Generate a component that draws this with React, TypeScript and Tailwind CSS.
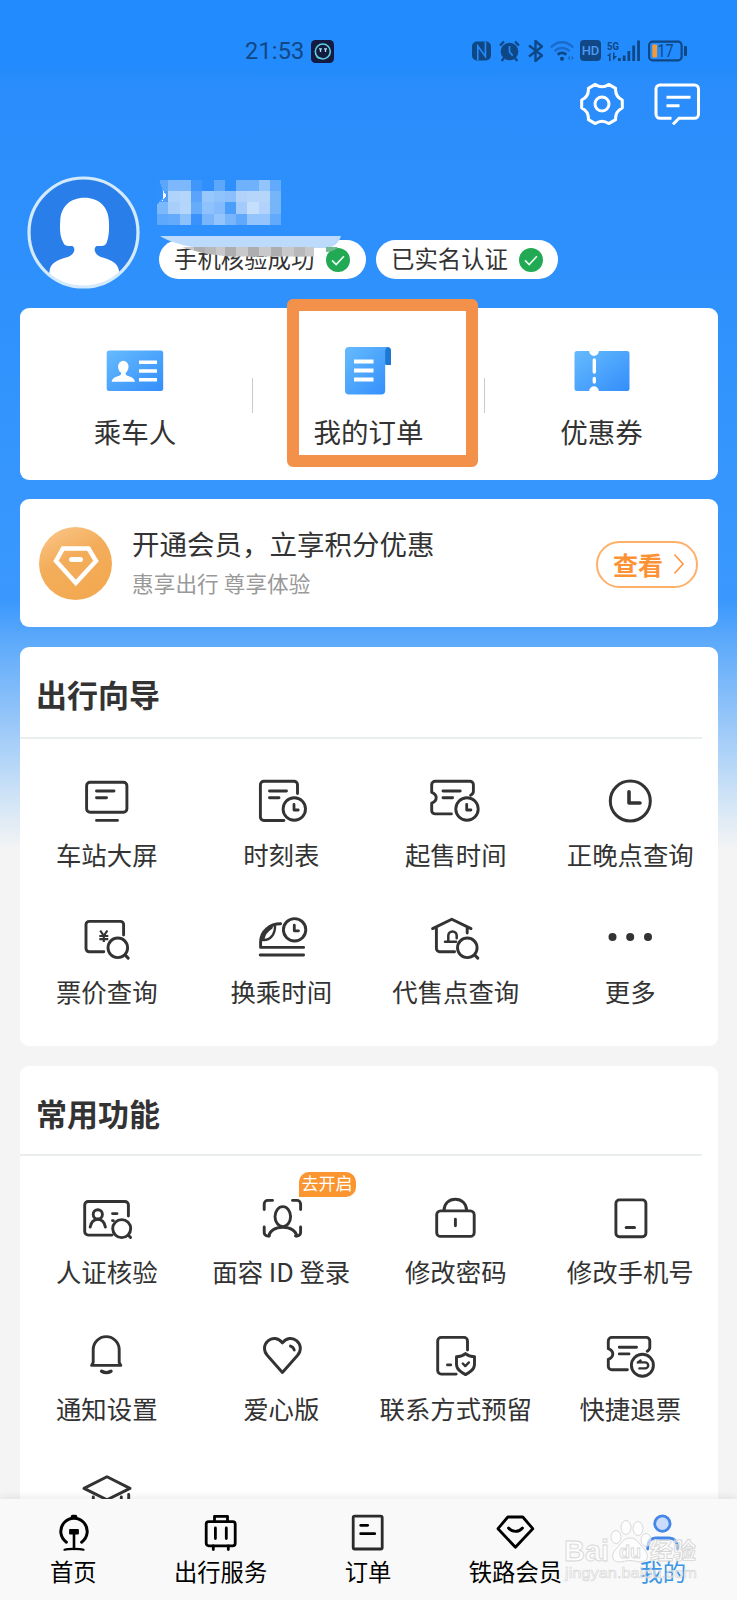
import type {ReactNode} from 'react';

type MenuItem = { label: string; icon: ReactNode; badge?: string };

const INK = '#333333';
const STATUS = '#0f4684';

const mosaic = [
    ['#5ba6fb', '#7db8fc', '#7db8fc', '#3f97fd', '#2f8ffc', '#5ea8fc', '#2d8efc', '#70b1fc', '#70b1fc', '#93c5fc', '#62aafc'],
    ['#4f9ffb', '#b0d3fb', '#b5d6fb', '#5aa5fb', '#98c7fc', '#8ec3fc', '#8abffc', '#b0d2fb', '#b5d5fb', '#b5d5fb', '#77b5fb'],
    ['#7cb8fc', '#a8cffc', '#b5d6fc', '#65acfb', '#8fc2fc', '#83bbfc', '#4c9efb', '#a3ccfc', '#c5defc', '#b0d2fc', '#77b5fb'],
    ['#5fa8fb', '#65abfb', '#8dc1fc', '#3a93fc', '#78b5fb', '#93c5fc', '#78b5fb', '#5fa8fb', '#93c5fc', '#93c5fc', '#62aafb'],
];

function LineIcon({children}: { children: ReactNode }) {
    return (
        <svg
            className="block h-[48px] w-[60px] shrink-0"
            viewBox="0 0 60 48"
            fill="none"
            stroke={INK}
            strokeWidth="2.9"
            strokeLinecap="round"
            strokeLinejoin="round"
        >
            {children}
        </svg>
    );
}

function SmallClock({cx, cy}: { cx: number; cy: number }) {
    return (
        <>
            <circle cx={cx} cy={cy} r="11.2" />
            <path d={`M${cx - 0.3} ${cy - 4.6}v5.6h4.2`} strokeWidth="2.8" />
        </>
    );
}

const guideItems: MenuItem[] = [
    {
        label: '车站大屏',
        icon: (
            <LineIcon>
                <rect x="9.6" y="5.2" width="40.3" height="30" rx="3.5" />
                <path d="M19.5 14H37M19.5 20.7h10M19.5 43.4h21" />
            </LineIcon>
        ),
    },
    {
        label: '时刻表',
        icon: (
            <LineIcon>
                <path d="M45.5 16.5V7.7a3.5 3.5 0 0 0-3.5-3.5H11.9a3.5 3.5 0 0 0-3.5 3.5V40a3.5 3.5 0 0 0 3.5 3.5h20" />
                <path d="M17.5 14h17M17.5 20.7h9.5" />
                <SmallClock cx={42.3} cy={32} />
            </LineIcon>
        ),
    },
    {
        label: '起售时间',
        icon: (
            <LineIcon>
                <path d="M44.6 18.2c2-1 2.8-2 2.8-4V7.7a3.5 3.5 0 0 0-3.5-3.5H9.2a3.5 3.5 0 0 0-3.5 3.5v7.6c6 2.4 6 8.4 0 10.8v7.3a3.5 3.5 0 0 0 3.5 3.5h16.2" />
                <path d="M17 14h17.2M17 20.7h9.6" />
                <SmallClock cx={41} cy={32} />
            </LineIcon>
        ),
    },
    {
        label: '正晚点查询',
        icon: (
            <LineIcon>
                <circle cx="29.3" cy="24" r="20" strokeWidth="3" />
                <path d="M28 14.8V26h11" strokeWidth="3.6" />
            </LineIcon>
        ),
    },
    {
        label: '票价查询',
        icon: (
            <LineIcon>
                <path d="M46.6 21V10.6a3.2 3.2 0 0 0-3.2-3.2H12.2A3.2 3.2 0 0 0 9 10.6v24a3.2 3.2 0 0 0 3.2 3.2h14.6" />
                <path d="m23.2 16.5 3.6 5.3 3.6-5.3M26.8 21.8V28M22.3 22h9M22.3 25.2h9" strokeWidth="2.2" strokeLinecap="butt" />
                <circle cx="40.8" cy="33.8" r="9.8" />
                <path d="m48.2 41.1 3 3" strokeWidth="3" />
            </LineIcon>
        ),
    },
    {
        label: '换乘时间',
        icon: (
            <LineIcon>
                <path d="M28.6 9.8C18 9.8 8.6 17 8.6 28v5.4h43M8.2 41h43.4" />
                <path d="M11 26c7 .6 12.2-5.6 12-13.8" strokeWidth="2.4" />
                <path d="M11 25.2c.8-4.6 3.8-8.6 8.4-11.6" strokeWidth="2.8" />
                <SmallClock cx={42.6} cy={15.8} />
            </LineIcon>
        ),
    },
    {
        label: '代售点查询',
        icon: (
            <LineIcon>
                <path d="M6.6 14.6 25.8 5.2 45 14.6M10.4 13.5v21a3.2 3.2 0 0 0 3.2 3.2h15M41.2 13.5v5.6" />
                <path d="M22.3 27.3v-5.6a4.2 4.2 0 0 1 8.4 0v2.6M19 27.8h11" strokeWidth="2.5" />
                <circle cx="41.3" cy="33.8" r="9.8" />
                <path d="m48.8 41.1 3 3" strokeWidth="3" />
            </LineIcon>
        ),
    },
    {
        label: '更多',
        icon: (
            <LineIcon>
                <g fill={INK} stroke="none">
                    <circle cx="11.5" cy="23" r="4" />
                    <circle cx="29.2" cy="23" r="4" />
                    <circle cx="47" cy="23" r="4" />
                </g>
            </LineIcon>
        ),
    },
];

const commonItems: MenuItem[] = [
    {
        label: '人证核验',
        icon: (
            <LineIcon>
                <path d="M51.4 22V11a3.5 3.5 0 0 0-3.5-3.5H11.2A3.5 3.5 0 0 0 7.7 11v26.6a3.5 3.5 0 0 0 3.5 3.5H35" />
                <circle cx="20.8" cy="20.4" r="4.6" />
                <path d="M13.2 33c.8-4.6 3.7-7.8 7.6-7.8s6.8 3.2 7.6 7.8" />
                <path d="M35.5 19.6H40M35.5 26.6h.8" />
                <circle cx="44.7" cy="34.6" r="9" />
                <path d="m51.3 41.2 2.2 2.2" />
            </LineIcon>
        ),
    },
    {
        label: '面容 ID 登录',
        badge: '去开启',
        icon: (
            <LineIcon>
                <path d="M12.2 15.5V10a3.6 3.6 0 0 1 3.6-3.6h4.7M40.5 6.4H45a3.6 3.6 0 0 1 3.6 3.6v5.5M12.2 33v5.5a3.6 3.6 0 0 0 3.6 3.6h1.5M48.6 33v5.5a3.6 3.6 0 0 1-3.6 3.6h-1.5" />
                <ellipse cx="30.8" cy="22.6" rx="7.8" ry="10" />
                <path d="M16.8 41.8c1-4.8 6-8.6 14-8.6s13 3.8 14 8.6" />
            </LineIcon>
        ),
    },
    {
        label: '修改密码',
        icon: (
            <LineIcon>
                <rect x="10.7" y="16.9" width="37.5" height="25.5" rx="4" />
                <path d="M18 16.4C18 9.5 23 5.2 29.3 5.2s11.3 4.3 11.3 11.2M29.4 25.2v6.6" />
            </LineIcon>
        ),
    },
    {
        label: '修改手机号',
        icon: (
            <LineIcon>
                <rect x="14.9" y="5.9" width="30" height="36.8" rx="3.5" />
                <path d="M25.2 33.6h8.3" strokeWidth="3" />
            </LineIcon>
        ),
    },
    {
        label: '通知设置',
        icon: (
            <LineIcon>
                <path d="M16.2 31.5V18.6a13 13 0 0 1 26 0v12.9l1.6 2.9H14.6z" />
                <path d="M24.6 40.2c2.8 1.7 6.6 1.7 9.4 0" strokeWidth="3.4" />
            </LineIcon>
        ),
    },
    {
        label: '爱心版',
        icon: (
            <LineIcon>
                <path d="M30.4 11.9c-4-5.2-10.2-5.7-14.4-2.1-4.6 4-4.6 10.5-.6 14.7l15 17 15-17c4-4.2 4-10.7-.6-14.7-4.2-3.6-10.4-3.1-14.4 2.1z" />
                <path d="M38.5 15.1c2 .5 3.2 1.9 3.7 3.9" />
            </LineIcon>
        ),
    },
    {
        label: '联系方式预留',
        icon: (
            <LineIcon>
                <path d="M41.5 19V9.9A3.5 3.5 0 0 0 38 6.4H15.2a3.5 3.5 0 0 0-3.5 3.5v29.7a3.5 3.5 0 0 0 3.5 3.5h15M21.5 33.9h3.2" />
                <path d="M39.5 22.6c2.5 2.2 5.6 3 9 3v7.6c0 5.4-4.5 8-9 10.4-4.5-2.4-9-5-9-10.4v-7.6c3.4 0 6.5-.8 9-3z" />
                <path d="m36.8 32.5 2.5 2.6 3.6-3.7" strokeWidth="2.4" />
            </LineIcon>
        ),
    },
    {
        label: '快捷退票',
        icon: (
            <LineIcon>
                <path d="M46.2 20.2c1.8-1 2.6-2 2.6-4V9.9a3.5 3.5 0 0 0-3.5-3.5H10.8a3.5 3.5 0 0 0-3.5 3.5v7.8c6 2.4 6 8 0 10.6v7a3.5 3.5 0 0 0 3.5 3.5h15.6" />
                <path d="M18.3 16.2h17.2M18.3 22.9H28" />
                <circle cx="41.4" cy="34.3" r="11" />
                <path d="M36.8 31.4h7.4a3 3 0 0 1 0 6h-5.8M36.8 31.4l2.8-1.8" strokeWidth="2.4" />
            </LineIcon>
        ),
    },
    {
        label: '',
        icon: (
            <LineIcon>
                <path d="M30 7.8 53 19.4 30 30.8 7 19.4zM16.3 28V38M44.3 28V38M51.7 25.4V38" />
            </LineIcon>
        ),
    },
];

function Check() {
    return (
        <svg className="block h-[24px] w-[24px]" viewBox="0 0 24 24" fill="none">
            <circle cx="12" cy="12" r="12" fill="#22a953" />
            <path d="m6 12.4 4.2 4.2 7.7-8.4" stroke="#e9fff0" strokeWidth="1.7" />
        </svg>
    );
}

function StatusBar() {
    return (
        <div className="flex h-[22px] items-center">
            <span className="ml-[245px] w-[60px] font-[Roboto] text-[23.5px] leading-[22px] tracking-[0.2px] text-[#124785]">21:53</span>
            <svg className="ml-[6px] block h-[23px] w-[23px]" viewBox="0 0 23 23" fill="none">
                <rect width="23" height="23" rx="4.5" fill="#151a40" />
                <circle cx="11.8" cy="11.5" r="7.5" stroke="#5bd0dc" strokeWidth="1.6" />
                <path d="M8 8.8h3M13 8.8h3M9.5 9v3M14.5 9v3" stroke="#a9e4f0" strokeWidth="1.3" />
                <path d="M5.5 16.5c1.5 1.5 3.5 2 5 1.5" stroke="#5bd0dc" strokeWidth="1.6" />
            </svg>
            <div className="-mt-px ml-[138px] flex h-[22px] items-center">
                <svg className="block" width="19" height="22" viewBox="0 0 19 22" fill="none">
                    <rect y="1.5" width="19" height="19" rx="5" fill={STATUS} />
                    <path d="M5.8 20V6l7.6 10.5V2" stroke="#2389fa" strokeWidth="1.7" />
                </svg>
                <svg className="ml-[8px] block" width="21" height="22" viewBox="0 0 21 22" fill="none">
                    <circle cx="10.5" cy="11.5" r="8.8" fill={STATUS} />
                    <path d="M1 5.5 5 1.5M20 5.5l-4-4M5 18l-2.3 3M16 18l2.3 3" stroke={STATUS} strokeWidth="2.3" />
                    <path d="M10.5 6v6l3.2 3.6" stroke="#2389fa" strokeWidth="1.7" />
                </svg>
                <svg className="ml-[8px] block" width="15" height="22" viewBox="0 0 15 22" fill="none">
                    <path d="M1 5.5 14 15.5 7.5 21V1L14 6.5 1 16.5" stroke={STATUS} strokeWidth="2.3" />
                </svg>
                <svg className="ml-[7px] block" width="24" height="22" viewBox="0 0 24 22" fill="none">
                    <path d="M.8 7.5c6.4-7 16-7 22.4 0M4.5 11.3c4.2-4.4 10.8-4.4 15 0" stroke="#1b6bcb" strokeWidth="2.3" />
                    <path d="M7.7 14.8c2.5-2.5 6.1-2.5 8.6 0" stroke={STATUS} strokeWidth="2.7" />
                    <circle cx="12" cy="18.8" r="2.1" fill={STATUS} />
                    <path d="m20 15.5-2.5 2.5 2.5 2.5zM21.5 15.5 24 18l-2.5 2.5z" fill="#1b6bcb" />
                </svg>
                <div className="ml-[6px] flex h-[21px] w-[21px] items-center justify-center rounded-[4px] bg-[#124785] font-[Roboto] text-[13px] leading-[18px] font-medium text-[#4a9bf5]">HD</div>
                <svg className="ml-[6px] block" width="33" height="22" viewBox="0 0 33 22">
                    <text x="0" y="9.5" fontFamily="Roboto" fontWeight="700" fontSize="11" textLength="12" lengthAdjust="spacingAndGlyphs" fill={STATUS}>5G</text>
                    <path d="M0 16l3.5-3.5V21H2v-5zM6 12.5h1.5V16H10l-4 4.5zM11 18h2.7v3H11zM15.8 15.5h2.7V21h-2.7zM20.5 11h2.7v10h-2.7zM25.3 5.5H28V21h-2.7zM30.2.5h2.7V21h-2.7z" fill={STATUS} />
                </svg>
                <svg className="ml-[8px] block" width="40" height="22" viewBox="0 0 40 22">
                    <rect x="1.1" y="1.6" width="32.5" height="18.8" rx="3.5" fill="none" stroke={STATUS} strokeWidth="2.1" />
                    <rect x="36" y="6" width="3" height="10" rx="1" fill={STATUS} />
                    <rect x="4.3" y="4.6" width="4.8" height="12.8" rx="1" fill="#f79a36" />
                    <text x="9.5" y="17.2" fontFamily="Roboto" fontSize="17.5" textLength="16" lengthAdjust="spacingAndGlyphs" fill={STATUS}>17</text>
                </svg>
            </div>
        </div>
    );
}

function TopActions() {
    return (
        <div className="mt-[21px] flex h-[42px] justify-end gap-[30px] pr-[37.5px]">
            <svg className="block" width="44" height="42" viewBox="-22 -21 44 42" fill="none" stroke="#fff" strokeWidth="3" strokeLinejoin="round">
                <path d="M20.3-4V4Q13 7.5 13.6 15.6L6.7 19.6Q0 15-6.7 19.6L-13.6 15.6Q-13 7.5-20.3 4V-4Q-13-7.5-13.6-15.6L-6.7-19.6Q0-15 6.7-19.6L13.6-15.6Q13-7.5 20.3-4z" />
                <circle r="7" />
            </svg>
            <svg className="block" width="46" height="42" viewBox="0 0 46 42" fill="none" stroke="#fff" strokeWidth="3">
                <path d="M17.5 35.3H6a4 4 0 0 1-4-4V6a4 4 0 0 1 4-4h34.5a4 4 0 0 1 4 4v25.3a4 4 0 0 1-4 4H25l-6 6" />
                <path d="M12.5 14.2h24M12.5 22.8h13" />
            </svg>
        </div>
    );
}

function Avatar() {
    return (
        <svg className="block h-[113px] w-[113px] shrink-0" viewBox="0 0 113 113">
            <defs>
                <clipPath id="avatar">
                    <circle cx="56.5" cy="56.5" r="54" />
                </clipPath>
            </defs>
            <circle cx="56.5" cy="56.5" r="54.5" fill="#297ee9" />
            <path
                clipPath="url(#avatar)"
                fill="#fff"
                d="M57.5 21.8C43 21.8 34 31 33.3 44c-.7 9-.5 17 3.2 23 1 2.2 2.5 3 5 3h4c1.6 1 2.3 3.500 1.500 5.500-2 5-7 5.500-12 7.300-7 2.500-11.500 5.500-12.500 12.200L21 113h74l-3-18c-1-6.700-5.500-9.700-12.500-12.200-5-1.800-9.500-2.300-11.500-7.300-.8-2-.1-4.500 1.500-5.500h5c2.500 0 4-1 5-3 2.500-6 3-14 2.300-23C81 31 72 21.800 57.500 21.800z"
            />
            <circle cx="56.5" cy="56.5" r="54.5" fill="none" stroke="#d3eafc" strokeWidth="3.2" />
        </svg>
    );
}

// blurred-out user name and the smear that runs over the first tag
function Redaction() {
    return (
        <>
            <svg className="absolute top-[4px] left-[17px] block" width="125" height="45" viewBox="0 0 125 45" shapeRendering="crispEdges">
                {mosaic.map((row, y) =>
                    row.map((fill, x) => <rect key={`${y}-${x}`} x={x * 11.3} y={y * 11.2} width="11.4" height="11.3" fill={fill} />),
                )}
                <path d="M0 0h2.5l3 11 5 4.5-7 4L0 25z" fill="#2e90fc" />
                <path d="M5.5 9v11.500l4-4.500z" fill="#f4f9ff" />
            </svg>
            <svg className="absolute top-[60px] left-[20px] block" width="184" height="22" viewBox="0 0 184 22">
                <path d="M0 0h181c-2 6-6 11-14 12H40C24 10 10 6 0 0z" fill="#bbdafc" />
                <path d="M22 11h132v9.5H70C50 19 34 15 22 11z" fill="#c8c8ca" />
                <path d="M34 11h11v6.5L34 14.5zM65 11h11v9.5L65 20zM88 11h11v9.5H88zM111 11h11v9.5h-11z" fill="#adadaf" />
                <path d="M45 11h11v8l-11-1.500zM134 11h11v9.500h-11z" fill="#b8b8ba" />
                <path d="M166 11h12c-3 3.500-7 5-12 5z" fill="#6fbb8f" />
            </svg>
        </>
    );
}

function Profile() {
    return (
        <div className="relative mt-[51px] ml-[27px] flex h-[113px]">
            <Avatar />
            <div className="ml-[19px] flex items-end gap-[10px] pb-[10px] text-[23.4px] leading-[37px] text-[#333]">
                <div className="flex h-[39px] w-[207px] items-start justify-between rounded-full bg-white pr-[16px] pl-[15px]">
                    <span className="whitespace-nowrap">手机核验成功</span>
                    <div className="pt-[8px]">
                        <Check />
                    </div>
                </div>
                <div className="flex h-[39px] w-[182px] items-start justify-between rounded-full bg-white px-[15px]">
                    <span className="whitespace-nowrap">已实名认证</span>
                    <div className="pt-[8px]">
                        <Check />
                    </div>
                </div>
            </div>
            <div className="absolute top-0 left-[113px]">
                <Redaction />
            </div>
        </div>
    );
}

function BlueGradient({id}: { id: string }) {
    return (
        <defs>
            <linearGradient id={id} x1="0" y1="0" x2="1" y2="1">
                <stop offset="0" stopColor="#66bbfd" />
                <stop offset="1" stopColor="#338efb" />
            </linearGradient>
        </defs>
    );
}

function QuickCard() {
    return (
        <section className="relative flex h-[172px] items-start rounded-[9px] bg-white pt-[38px] text-[27.5px] leading-[36px] text-[#333]">
            <div className="flex w-[232px] flex-col items-center">
                <svg className="-ml-[2px] block h-[50px] w-[58px]" viewBox="0 0 58 50">
                    <BlueGradient id="id-card" />
                    <rect x=".7" y="4.5" width="56.5" height="40.5" rx="2.5" fill="url(#id-card)" />
                    <ellipse cx="17.3" cy="21" rx="5.2" ry="6.3" fill="#fff" />
                    <path d="M15 25h4.6v3c1 3 8.5 2 9.4 7.8H5.6C6.5 30 14 31 15 28z" fill="#fff" />
                    <path d="M33 16.2h18M33 25h18M33 33.8h18" stroke="#fff" strokeWidth="3.6" />
                </svg>
                <span className="mt-[17px] -ml-[2px]">乘车人</span>
            </div>
            <div className="mt-[32px] h-[35px] w-px bg-[#c9c9c9]" />
            <div className="flex w-[231px] flex-col items-center">
                <svg className="-ml-px block h-[50px] w-[48px]" viewBox="0 0 48 50">
                    <BlueGradient id="order" />
                    <path d="M39 1h4.5a3.500 3.500 0 0 1 3.500 3.500V19h-4c-2 0-3-1-3-3z" fill="#1c78d2" />
                    <path d="M5 1h39c-2 1-2.800 2.500-2.800 5v38.500a4 4 0 0 1-4 4H5a4 4 0 0 1-4-4V5a4 4 0 0 1 4-4z" fill="url(#order)" />
                    <path d="M10 15.5h19.500M10 24.500h19.500M10 33.500h19.500" stroke="#fff" strokeWidth="3.8" />
                </svg>
                <span className="mt-[17px]">我的订单</span>
            </div>
            <div className="mt-[32px] h-[35px] w-px bg-[#c9c9c9]" />
            <div className="flex w-[233px] flex-col items-center">
                <svg className="block h-[50px] w-[56px]" viewBox="0 0 56 50">
                    <BlueGradient id="coupon" />
                    <path d="M3 5h12c1 6.5 9 6.5 10 0h28a2.5 2.5 0 0 1 2.5 2.5v35A2.5 2.5 0 0 1 53 45H25c-1-6.5-9-6.5-10 0H3a2.5 2.5 0 0 1-2.5-2.5v-35A2.5 2.5 0 0 1 3 5z" fill="url(#coupon)" />
                    <path d="M20.3 14v12M20.3 32.5V36" stroke="#fff" strokeWidth="3.4" strokeLinecap="round" />
                </svg>
                <span className="mt-[17px]">优惠券</span>
            </div>
            <div className="absolute -top-[9px] left-[267px] h-[168px] w-[191px] rounded-[6px] border-[12px] border-[#f3914b]" />
        </section>
    );
}

function MemberCard() {
    return (
        <section className="mt-[19px] flex h-[128px] items-center rounded-[9px] bg-white pr-[20px] pl-[19px]">
            <svg className="block h-[73px] w-[73px] shrink-0" viewBox="0 0 73 73" fill="none">
                <defs>
                    <linearGradient id="member" x1="0" y1="0" x2=".5" y2="1">
                        <stop offset="0" stopColor="#fbc98d" />
                        <stop offset=".5" stopColor="#f3ad5b" />
                        <stop offset="1" stopColor="#f3a951" />
                    </linearGradient>
                </defs>
                <circle cx="36.5" cy="36.5" r="36.5" fill="url(#member)" />
                <path d="M24 21.5h25.5L57 34 36.8 56 17 34z" stroke="#fff" strokeWidth="4.5" />
                <path d="M32.5 32.5h9" stroke="#fff" strokeWidth="5" strokeLinecap="round" />
            </svg>
            <div className="ml-[20px] flex flex-col whitespace-nowrap">
                <span className="text-[27.5px] leading-[39px] text-[#333]">开通会员，立享积分优惠</span>
                <span className="text-[21.6px] leading-[40px] tracking-[0.1px] text-[#999]">惠享出行 尊享体验</span>
            </div>
            <div className="mt-[2px] ml-auto flex h-[47px] w-[102px] items-center justify-center gap-[10px] rounded-full border-2 border-[#ffb068] pl-[4px] text-[25px] leading-[44px] font-bold text-[#fd9234]">
                <span>查看</span>
                <svg className="block" width="12" height="22" viewBox="0 0 12 22" fill="none">
                    <path d="m1.5 1.5 8.5 9.5-8.5 9.5" stroke="#fd9a44" strokeWidth="1.7" />
                </svg>
            </div>
        </section>
    );
}

function MenuGrid({items}: { items: MenuItem[] }) {
    return (
        <div className="grid auto-rows-[137.4px] grid-cols-4">
            {items.map((item, index) => (
                <div key={index} className="relative flex flex-col items-center">
                    {item.icon}
                    <span className="mt-[13px] -ml-px text-[25.4px] leading-[32px] whitespace-nowrap text-[#333]">{item.label}</span>
                    {item.badge && (
                        <span className="absolute -top-[22px] left-[104px] h-[25px] w-[57px] rounded-[10px] rounded-bl-none bg-[#fa9530] text-center text-[17px] leading-[22px] whitespace-nowrap text-white">
                            {item.badge}
                        </span>
                    )}
                </div>
            ))}
        </div>
    );
}

const tabs: MenuItem[] = [
    {
        label: '首页',
        icon: (
            <>
                <path d="M12.4 30.2A13.2 13.2 0 1 1 27.6 30.2" strokeWidth="3" />
                <path d="M20 19v18" strokeWidth="2.6" />
                <path d="M18.5 4.5h3" strokeWidth="3.5" />
                <path d="M16 18h8v3.5h-8z" fill="#000" strokeWidth="1.8" />
                <path d="M10.5 37.7c4-1 15-1 19 0" strokeWidth="2.2" />
            </>
        ),
    },
    {
        label: '出行服务',
        icon: (
            <>
                <rect x="5.2" y="9.6" width="29" height="24.2" rx="2.5" />
                <path d="M13.5 9V4.3h13V9M14.4 16v10.5M25.3 16v10.5M12.3 34v3.5M27.3 34v3.5" />
            </>
        ),
    },
    {
        label: '订单',
        icon: (
            <>
                <rect x="5.2" y="4.2" width="29" height="32.8" rx="1.5" stroke="#2b2b2b" />
                <path d="M12.7 13.3h7M12.7 21.7h14" />
            </>
        ),
    },
    {
        label: '铁路会员',
        icon: (
            <>
                <path d="M11.8 5h15l10 11.7-17.4 18.6L2 16.7z" />
                <path d="M12.5 16c4 4.6 10 4.6 14 0" />
            </>
        ),
    },
    {
        label: '我的',
        icon: (
            <g stroke="#4587e6">
                <circle cx="19.4" cy="11.6" r="7.7" fill="#c9dcfb" />
                <path d="M4.7 37V34a8 8 0 0 1 8-8h13.6a8 8 0 0 1 8 8v3" />
            </g>
        ),
    },
];

function Watermark() {
    return (
        <svg
            className="absolute top-[18px] left-[562px] block"
            width="142"
            height="68"
            viewBox="0 0 142 68"
            fill="#ffffff"
            fillOpacity=".6"
            stroke="#cfcfcf"
            strokeWidth=".9"
            strokeOpacity=".85"
        >
            <text x="2" y="44" fontFamily="Liberation Sans" fontWeight="700" fontSize="30" textLength="45" lengthAdjust="spacingAndGlyphs">Bai</text>
            <ellipse cx="54" cy="20" rx="5" ry="6.5" />
            <ellipse cx="64" cy="10.5" rx="5" ry="7" />
            <ellipse cx="76" cy="11.5" rx="5" ry="7" />
            <ellipse cx="84" cy="23" rx="5" ry="6.5" />
            <path d="M68 21c7 0 9 6 14 11s5 13-3 13c-4 0-7-1.5-11-1.5S61 45 57 45c-8 0-8-8-3-13s7-11 14-11z" />
            <text x="57" y="41" fontFamily="Liberation Sans" fontWeight="700" fontSize="19" textLength="22" lengthAdjust="spacingAndGlyphs">du</text>
            <text x="88" y="42" fontFamily="Noto Sans CJK SC" fontWeight="700" fontSize="23" textLength="46" lengthAdjust="spacingAndGlyphs">经验</text>
            <text x="3" y="61" fontFamily="Liberation Sans" fontSize="15.5" textLength="132" lengthAdjust="spacingAndGlyphs" strokeWidth=".6">jingyan.baidu.com</text>
        </svg>
    );
}

function TabBar() {
    return (
        <nav className="relative grid h-[101px] shrink-0 grid-cols-5 bg-[#f9f9f9] shadow-[0_-2px_8px_rgba(0,0,0,0.08)]">
            {tabs.map((tab, index) => (
                <div key={tab.label} className="flex flex-col items-center pt-[13px]">
                    <svg
                        className="block h-[40px] w-[40px]"
                        viewBox="0 0 40 40"
                        fill="none"
                        stroke="#000"
                        strokeWidth="2.8"
                        strokeLinecap="round"
                        strokeLinejoin="round"
                    >
                        {tab.icon}
                    </svg>
                    <span className={index === 4 ? 'mt-[3px] -ml-px text-[23.3px] leading-[32px] text-[#3d95e6]' : 'mt-[3px] -ml-px text-[23.3px] leading-[32px] text-black'}>
                        {tab.label}
                    </span>
                </div>
            ))}
            <Watermark />
        </nav>
    );
}

export default function App() {
    return (
        <div className="flex h-[1600px] w-[737px] flex-col overflow-hidden bg-[#f4f4f4] bg-[linear-gradient(180deg,#228bfe_0px,#228bfd_66px,#2a8dfb_84px,#2e91fc_300px,#3696fe_480px,#3a98fd_600px,#5ca9fb_640px,#b3d5f8_760px,#d5e6f6_805px,#f4f4f4_850px)] font-['Noto_Sans_CJK_SC',sans-serif]">
            <main className="flex min-h-0 flex-1 flex-col overflow-hidden pt-[40px]">
                <StatusBar />
                <TopActions />
                <Profile />
                <div className="mt-[19px] mr-[19px] ml-[20px] flex flex-col">
                    <QuickCard />
                    <MemberCard />
                    <section className="mt-[20px] h-[399px] shrink-0 rounded-[9px] bg-white">
                        <h2 className="mr-[16px] h-[92px] border-b-2 border-[#eaeeef] pl-[16px] text-[31px] leading-[94px] font-bold text-[#333]">出行向导</h2>
                        <div className="pt-[38px]">
                            <MenuGrid items={guideItems} />
                        </div>
                    </section>
                    <section className="mt-[20px] h-[600px] shrink-0 rounded-[9px] bg-white">
                        <h2 className="mr-[16px] h-[90px] border-b-2 border-[#eaeeef] pl-[16px] text-[31px] leading-[94px] font-bold text-[#333]">常用功能</h2>
                        <div className="pt-[38px]">
                            <MenuGrid items={commonItems} />
                        </div>
                    </section>
                </div>
            </main>
            <TabBar />
        </div>
    );
}
